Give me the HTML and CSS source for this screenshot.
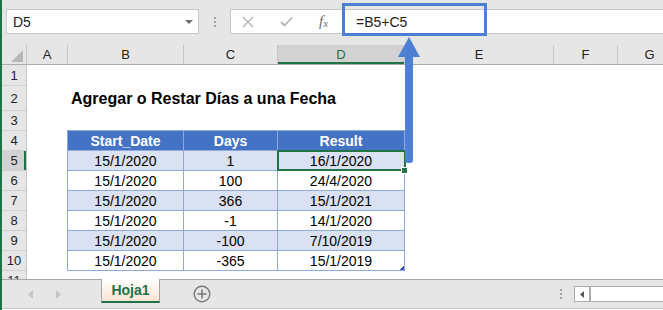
FILE: index.html
```html
<!DOCTYPE html>
<html lang="es">
<head>
    <meta charset="UTF-8">
    <title>Agregar o Restar Días a una Fecha</title>
    <link rel="stylesheet" href="styles.css">
</head>
<body>
    <div class="app">
        <div class="formula-bar">
            <div class="name-box">
                <span>D5</span>
                <svg class="caret" width="8" height="4" viewBox="0 0 8 4"><path d="M0 0H8L4 4Z" fill="#6d6d6d"/></svg>
            </div>
            <div class="grip"><i></i><i></i><i></i></div>
            <div class="formula-field">
                <div class="fx-buttons">
                    <svg width="12" height="12" viewBox="0 0 12 12"><path d="M1 1L11 11M11 1L1 11" stroke="#b4b4b4" stroke-width="1.4" fill="none"/></svg>
                    <svg width="13" height="11" viewBox="0 0 13 11"><path d="M1 6L4.5 9.5L12 1.5" stroke="#b4b4b4" stroke-width="1.8" fill="none"/></svg>
                    <span class="fx">f<sub>x</sub></span>
                </div>
                <div class="formula-text">=B5+C5</div>
            </div>
        </div>

        <div class="col-headers">
            <div class="corner">
                <svg width="12" height="12" viewBox="0 0 12 12"><path d="M12 0V12H0Z" fill="#b8b8b8"/></svg>
            </div>
            <div class="ch">A</div>
            <div class="ch">B</div>
            <div class="ch">C</div>
            <div class="ch active">D</div>
            <div class="ch">E</div>
            <div class="ch">F</div>
            <div class="ch">G</div>
        </div>

        <div class="sheet-body">
            <div class="row-headers">
                <div class="rh">1</div>
                <div class="rh tall">2</div>
                <div class="rh">3</div>
                <div class="rh">4</div>
                <div class="rh active">5</div>
                <div class="rh">6</div>
                <div class="rh">7</div>
                <div class="rh">8</div>
                <div class="rh">9</div>
                <div class="rh">10</div>
                <div class="rh">11</div>
            </div>
            <div class="cells">
                <h1 class="title">Agregar o Restar Días a una Fecha</h1>
                <div class="data-table">
                    <div class="th">Start_Date</div>
                    <div class="th">Days</div>
                    <div class="th">Result</div>

                    <div class="td band">15/1/2020</div>
                    <div class="td band">1</div>
                    <div class="td band selected">16/1/2020</div>

                    <div class="td">15/1/2020</div>
                    <div class="td">100</div>
                    <div class="td">24/4/2020</div>

                    <div class="td band">15/1/2020</div>
                    <div class="td band">366</div>
                    <div class="td band">15/1/2021</div>

                    <div class="td">15/1/2020</div>
                    <div class="td">-1</div>
                    <div class="td">14/1/2020</div>

                    <div class="td band">15/1/2020</div>
                    <div class="td band">-100</div>
                    <div class="td band">7/10/2019</div>

                    <div class="td">15/1/2020</div>
                    <div class="td">-365</div>
                    <div class="td corner-mark">15/1/2019</div>
                </div>
            </div>
        </div>

        <div class="tab-bar">
            <div class="tab-nav">
                <svg width="5" height="9" viewBox="0 0 5 9"><path d="M5 0V9L0 4.5Z" fill="#c4c4c4"/></svg>
                <svg width="5" height="9" viewBox="0 0 5 9"><path d="M0 0V9L5 4.5Z" fill="#c4c4c4"/></svg>
            </div>
            <div class="sheet-tab">Hoja1</div>
            <svg class="add-sheet" width="18" height="18" viewBox="0 0 18 18">
                <circle cx="9" cy="9" r="7.8" fill="none" stroke="#7a7a7a" stroke-width="1.4"/>
                <path d="M9 4.5V13.5M4.5 9H13.5" stroke="#7a7a7a" stroke-width="1.6"/>
            </svg>
            <div class="tab-grip"><i></i><i></i><i></i></div>
            <div class="hscroll">
                <div class="hscroll-btn">
                    <svg width="4" height="7" viewBox="0 0 4 7"><path d="M4 0V7L0 3.5Z" fill="#555"/></svg>
                </div>
                <div class="hscroll-track"></div>
            </div>
        </div>

        <!-- annotation overlays -->
        <div class="highlight-box"></div>
        <svg class="arrow" width="24" height="130" viewBox="0 0 24 130">
            <path d="M12 1L23 21H1Z" fill="#4d7fd3"/>
            <rect x="8" y="19" width="8" height="108" rx="3" fill="#4d7fd3"/>
        </svg>
    </div>
</body>
</html>
```

FILE: styles.css
```css
body {
    margin: 0;
    font-family: 'Liberation Sans', Arial, sans-serif;
    background: #ffffff;
}

.app {
    position: relative;
    width: 661px;
    height: 310px;
    border-left: 2px solid #217346;
    overflow: hidden;
    background: #ffffff;
}

/* formula bar */
.formula-bar {
    height: 44px;
    background: #e6e6e6;
    display: flex;
    align-items: flex-start;
    padding-top: 9px;
    box-sizing: border-box;
}

.name-box {
    margin-left: 4px;
    width: 193px;
    height: 25px;
    box-sizing: border-box;
    background: #ffffff;
    border: 1px solid #c6c6c6;
    display: flex;
    align-items: center;
    justify-content: space-between;
    padding: 0 5px 0 6px;
    font-size: 14px;
    color: #222;
}

.grip {
    width: 31px;
    height: 25px;
    display: flex;
    flex-direction: column;
    align-items: center;
    justify-content: center;
    gap: 2px;
}

.grip i,
.tab-grip i {
    display: block;
    width: 2px;
    height: 2px;
    background: #a3a3a3;
}

.formula-field {
    flex: 1;
    height: 25px;
    box-sizing: border-box;
    background: #ffffff;
    border: 1px solid #c6c6c6;
    border-right: none;
    display: flex;
    align-items: center;
}

.fx-buttons {
    width: 111px;
    display: flex;
    align-items: center;
    gap: 26px;
    padding-left: 11px;
    box-sizing: border-box;
}

.fx {
    font-family: 'Liberation Serif', serif;
    font-style: italic;
    font-size: 15px;
    color: #6d6d6d;
}

.fx sub {
    font-size: 11px;
    vertical-align: -1px;
}

.formula-text {
    padding-left: 14px;
    font-size: 14px;
    color: #222;
}

/* column headers */
.col-headers {
    display: grid;
    grid-template-columns: 25px 41px 116px 94px 127px 149px 64px 64px;
    height: 20px;
    background: #e6e6e6;
    border-bottom: 1px solid #ababab;
}

.corner {
    border-right: 1px solid #c6c6c6;
    display: flex;
    align-items: flex-end;
    justify-content: flex-end;
    padding: 0 3px 2px 0;
}

.ch {
    border-right: 1px solid #c6c6c6;
    display: flex;
    align-items: center;
    justify-content: center;
    font-size: 13px;
    color: #222;
    margin-top: 1px;
}

.ch.active {
    background: #d2d2d2;
    color: #217346;
    box-shadow: inset 0 -2px 0 #217346;
}

/* sheet */
.sheet-body {
    display: flex;
}

.row-headers {
    width: 24px;
    flex-shrink: 0;
    background: #e6e6e6;
    border-right: 1px solid #c6c6c6;
}

.rh {
    height: 20px;
    box-sizing: border-box;
    border-top: 1px solid #d0d0d0;
    display: flex;
    align-items: center;
    justify-content: center;
    font-size: 13px;
    color: #222;
}

.rh:first-child {
    border-top: none;
}

.rh.tall {
    height: 25px;
}

.rh.active {
    background: #d2d2d2;
    box-shadow: inset -2px 0 0 #217346;
}

.cells {
    flex: 1;
    padding-left: 40px;
}

.title {
    margin: 20px 0 0;
    height: 25px;
    line-height: 27px;
    padding-left: 4px;
    font-size: 16px;
    font-weight: bold;
    color: #000;
    margin-bottom: 20px;
}

.data-table {
    width: 338px;
    display: grid;
    grid-template-columns: 115px 93px 126px;
    grid-auto-rows: 19px;
    gap: 1px;
    padding: 1px;
    box-sizing: border-box;
    background: #8ea9db;
}

.th,
.td {
    display: flex;
    align-items: center;
    justify-content: center;
    font-size: 14px;
    background: #ffffff;
    color: #000;
    position: relative;
}

.th {
    background: #4472c4;
    color: #ffffff;
    font-weight: bold;
}

.td.band {
    background: #d9e1f2;
}

.td.selected::after {
    content: "";
    position: absolute;
    left: -1px;
    top: -1px;
    right: -2px;
    bottom: -1px;
    border: 2px solid #217346;
}

.td.selected::before {
    content: "";
    position: absolute;
    right: -4px;
    bottom: -4px;
    width: 5px;
    height: 5px;
    background: #217346;
    border: 1px solid #ffffff;
    z-index: 1;
}

.td.corner-mark::after {
    content: "";
    position: absolute;
    right: 0;
    bottom: 0;
    width: 4px;
    height: 4px;
    background: linear-gradient(135deg, transparent 50%, #3a5bb0 50%);
}

/* sheet tabs */
.tab-bar {
    position: absolute;
    left: 0;
    right: 0;
    top: 279px;
    height: 28px;
    background: #e6e6e6;
    border-top: 1px solid #a6a6a6;
    border-bottom: 1px solid #c6c6c6;
    display: flex;
    align-items: center;
}

.tab-nav {
    width: 99px;
    display: flex;
    gap: 23px;
    padding-left: 26px;
    box-sizing: border-box;
}

.sheet-tab {
    align-self: flex-start;
    margin-top: -1px;
    width: 59px;
    height: 24px;
    box-sizing: border-box;
    border: 1px solid #a6a6a6;
    border-top: none;
    border-bottom: 2px solid #217346;
    background: linear-gradient(#ffffff, #fbe3d3);
    display: flex;
    align-items: center;
    justify-content: center;
    font-size: 14px;
    font-weight: bold;
    color: #217346;
}

.add-sheet {
    margin-left: 33px;
}

.tab-grip {
    margin-left: 349px;
    display: flex;
    flex-direction: column;
    gap: 2px;
}

.hscroll {
    margin-left: 12px;
    flex: 1;
    height: 16px;
    box-sizing: border-box;
    border: 1px solid #acacac;
    border-right: none;
    background: #ffffff;
    display: flex;
}

.hscroll-btn {
    width: 14px;
    border-right: 2px solid #acacac;
    display: flex;
    align-items: center;
    justify-content: center;
}

/* annotation */
.highlight-box {
    position: absolute;
    left: 340px;
    top: 3px;
    width: 145px;
    height: 33px;
    box-sizing: border-box;
    border: 3px solid #4d7fd3;
}

.arrow {
    position: absolute;
    left: 395px;
    top: 36px;
}
```
